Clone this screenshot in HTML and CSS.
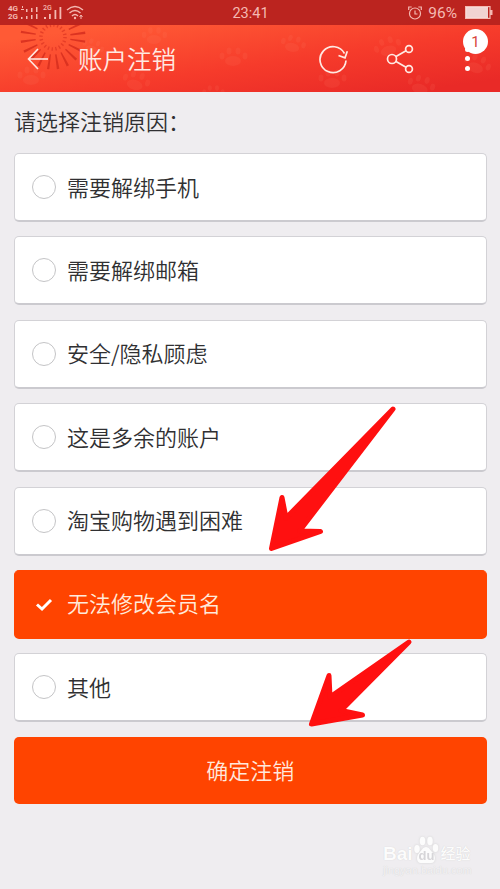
FILE: index.html
```
<!DOCTYPE html>
<html lang="zh-CN">
<head>
  <meta charset="UTF-8" />
  <meta name="viewport" content="width=device-width, initial-scale=1.0"/>
  <title>账户注销</title>
  <link rel="stylesheet" href="styles.css">
</head>
<body>
  <header class="top">
    <svg class="pattern" width="500" height="92" viewBox="0 0 500 92" aria-hidden="true">
      <defs>
        <g id="paw">
          <ellipse cx="0" cy="5" rx="8" ry="5"/>
          <ellipse cx="-11" cy="0" rx="2.500" ry="3.500"/>
          <ellipse cx="-4" cy="-5" rx="2.500" ry="3.500"/>
          <ellipse cx="5" cy="-5" rx="2.500" ry="3.500"/>
          <ellipse cx="12" cy="0" rx="2.500" ry="3.500"/>
        </g>
      </defs>
      <g class="paws">
        <use href="#paw" x="31" y="75"/>
        <use href="#paw" transform="translate(93 46) rotate(20) scale(.8)"/>
        <use href="#paw" transform="translate(136 80) rotate(15)"/>
        <use href="#paw" transform="translate(154 35) scale(.9)"/>
        <use href="#paw" x="233" y="56"/>
        <use href="#paw" transform="translate(293 43) rotate(12) scale(.9)"/>
        <use href="#paw" transform="translate(213 92) scale(.8)"/>
        <use href="#paw" x="332" y="78"/>
        <use href="#paw" transform="translate(387 46) rotate(-18)"/>
        <use href="#paw" transform="translate(421 84) rotate(15)"/>
        <use href="#paw" transform="translate(477 63) rotate(20)"/>
      </g>
      <g class="firework">
        <circle cx="53" cy="37" r="12" stroke-width="3.500" stroke-dasharray="1.300 2.470" opacity=".7"/>
        <circle cx="53" cy="37" r="25" stroke-width="15" stroke-dasharray="1.900 5.954" transform="rotate(6 53 37)"/>
      </g>
    </svg>

    <div class="status">
      <div class="signal">
        <div class="net"><span>4G</span><span>2G</span></div>
        <svg class="dual" width="17" height="15" viewBox="0 0 17 15" fill="currentColor">
          <path d="M1 0h1v2H1zM0 3h3v1H0zM5 3h1.500v3H5zM10 2h1.500v4H10zM15 1h1.500v5H15zM0 11h1.500v2H0zM5 10h1.500v3H5zM10 9h1.500v4H10zM15 8h1.500v5H15z"/>
        </svg>
        <div class="sim">
          <span>2G</span>
          <svg width="18" height="13" viewBox="0 0 18 13" fill="currentColor">
            <path d="M0 10h2v2H0zM5 7h1.800v5H5zM10.500 3h1.800v9h-1.800zM15.500 0h1.800v12h-1.800z"/>
          </svg>
        </div>
        <svg class="wifi" width="18" height="15" viewBox="0 0 18 15" fill="none" stroke="currentColor" stroke-width="1.4">
          <path d="M1 5Q9-2 17 5M3.5 8Q9 3 14.5 8M6 11Q9 8 12 11"/>
          <circle cx="9" cy="13" r="1.200" fill="currentColor" stroke="none"/>
          <path d="M15 10v4M13.5 12l1.5-2 1.5 2" stroke-width="1"/>
        </svg>
      </div>
      <span class="time">23:41</span>
      <div class="power">
        <svg width="14" height="14" viewBox="0 0 14 14" fill="none" stroke="currentColor" stroke-width="1.2">
          <circle cx="7" cy="7.5" r="5.5"/>
          <path d="M7 4.5V8h2.5M.7 4V1h3M13.3 4V1h-3"/>
        </svg>
        <span>96%</span>
        <svg class="battery" width="28" height="13" viewBox="0 0 28 13">
          <rect x=".6" y=".6" width="24.4" height="11.8" fill="none" stroke="currentColor" stroke-width="1.2"/>
          <rect x="1" y="1" width="22" height="11" fill="#fff" fill-opacity=".8"/>
          <path d="M25 4h2.5v5H25z" fill="currentColor"/>
        </svg>
      </div>
    </div>

    <nav class="navbar">
      <svg class="back" width="22" height="22" viewBox="0 0 22 22" fill="none" stroke="currentColor" stroke-width="1.6">
        <path d="M21 11H2M11 1L1.5 11 11 21"/>
      </svg>
      <h1>账户注销</h1>
      <svg class="refresh" width="30" height="30" viewBox="0 0 30 30" fill="none" stroke="currentColor" stroke-width="1.7">
        <path d="M25.500 9.500A13 13 0 1 0 27 16.500M19.500 11.500l6.500 2.300 2.300-6.500"/>
      </svg>
      <svg class="share" width="28" height="30" viewBox="0 0 28 30" fill="none" stroke="currentColor" stroke-width="1.7">
        <circle cx="6" cy="15" r="4.5"/>
        <circle cx="23" cy="5" r="3.4"/>
        <circle cx="23" cy="25" r="3.4"/>
        <path d="M10 12.6L20 6.7M10 17.4l10 5.9"/>
      </svg>
      <div class="more">
        <i></i><i></i><i></i>
        <span class="badge">1</span>
      </div>
    </nav>
  </header>

  <main>
    <h2>请选择注销原因：</h2>
    <form class="reasons">
      <label class="option"><span class="radio"></span><span>需要解绑手机</span></label>
      <label class="option"><span class="radio"></span><span>需要解绑邮箱</span></label>
      <label class="option"><span class="radio"></span><span>安全/隐私顾虑</span></label>
      <label class="option"><span class="radio"></span><span>这是多余的账户</span></label>
      <label class="option"><span class="radio"></span><span>淘宝购物遇到困难</span></label>
      <label class="option selected">
        <svg class="check" width="24" height="24" viewBox="0 0 24 24" fill="none" stroke="#fff" stroke-width="3">
          <path d="M5 12.5l5 4.5 9-9"/>
        </svg>
        <span>无法修改会员名</span>
      </label>
      <label class="option"><span class="radio"></span><span>其他</span></label>
      <button type="button" class="submit">确定注销</button>
    </form>
  </main>

  <footer class="watermark">
    <div class="brand">
      <span class="bai">Bai</span>
      <span class="paw-logo">
        <svg width="26" height="28" viewBox="0 0 26 28" fill="currentColor">
          <ellipse cx="4" cy="13" rx="2.800" ry="4"/>
          <ellipse cx="9.5" cy="5" rx="2.800" ry="4.3"/>
          <ellipse cx="17" cy="5" rx="2.800" ry="4.3"/>
          <ellipse cx="22.5" cy="12" rx="2.800" ry="4"/>
          <path d="M13 11c3 0 4 3 6.500 5.500C23 20 23 27 18 27H8c-5 0-5-7-1.500-10.500C9 14 10 11 13 11z"/>
        </svg>
        <b>du</b>
      </span>
      <span class="jingyan">经验</span>
    </div>
    <div class="url">jingyan.baidu.com</div>
  </footer>

  <svg class="arrows" width="500" height="889" viewBox="0 0 500 889" aria-hidden="true">
    <path d="M393 409L286 518 282 497.500 271.500 548.500 320.500 531.500 299.500 531z"/>
    <path d="M409 642L330 697 329 675.500 311.500 724 362.500 715 341 710.500z"/>
  </svg>
</body>
</html>
```
FILE: styles.css
```
:root {
  --accent-color: #ff4400;
  --bg-color: #efedf0;
  --text-color: #303032;
  --arrow-color: #ff1010;
}
* { box-sizing: border-box; }
body {
  margin: 0; height: 889px; position: relative; overflow: hidden;
  background: var(--bg-color); color: var(--text-color);
  font-family: "Noto Sans CJK SC", sans-serif; font-weight: 350;
}
svg { display: block; flex-shrink: 0; }

.top {
  position: relative; height: 92px; color: #fff;
  background: linear-gradient(172deg, #ff5a35 25%, #f63b2b 62%, #e92a27 92%);
}
.pattern { position: absolute; left: 0; top: 0; }
.paws { fill: #ff866c; fill-opacity: 0.12; }
.firework { fill: none; stroke: #d8301f; stroke-opacity: 0.9; }

.status {
  position: relative; height: 25px; padding: 0 7px 0 8px;
  display: grid; grid-template-columns: 1fr auto 1fr; align-items: center;
  background: rgba(184, 34, 30, 0.96); color: #f4b9b2;
  font-family: Roboto, sans-serif; font-weight: 400;
}
.signal { display: flex; align-items: flex-start; height: 16px; }
.net { display: flex; flex-direction: column; width: 12px; font-size: 8px; line-height: 8px; font-weight: 700; }
.dual { margin: 1px 0 0 1px; }
.sim { width: 18px; height: 15px; margin: 0 0 0 6px; display: grid; }
.sim > * { grid-area: 1 / 1; }
.sim span { font-size: 7px; line-height: 7px; font-weight: 500; margin-left: -1px; }
.sim svg { margin-top: 2px; }
.wifi { margin-left: 4px; }
.time { font-size: 14.500px; padding-top: 2px; }
.power { display: flex; justify-content: flex-end; align-items: center; font-size: 15.500px; }
.power span { margin: 1px 8px 0 6px; }

.navbar {
  position: relative; height: 67px; padding: 0 30px 0 27px;
  display: flex; align-items: center; color: #ffe9e2;
}
h1 { margin: 0 0 0 29px; flex: 1; font-size: 24.500px; font-weight: 350; line-height: 36px; }
.refresh { margin-right: 37px; }
.share { margin-right: 51px; }
.more { position: relative; width: 5px; display: flex; flex-direction: column; gap: 4.500px; }
.more i { width: 5px; height: 5px; border-radius: 50%; background: #fff; }
.badge {
  position: absolute; left: -2px; top: -18px; width: 25px; height: 25px; border-radius: 50%;
  background: #fff; color: #d8453d; text-align: center;
  font: 400 15px/26px Roboto, sans-serif;
}

main { padding: 10px 13.500px 0 14px; }
h2 { margin: 0 0 15px; font-size: 22px; font-weight: 350; line-height: 36px; }
.reasons { display: flex; flex-direction: column; gap: 14.400px; }
.option {
  height: 69px; padding: 0 17px; display: flex; align-items: center; gap: 11px;
  background: #fff; border: 1px solid #d3d2d6; border-bottom: 2px solid #cbcacf; border-radius: 5px;
  font-size: 22px; line-height: 32px;
}
.option > span:last-child { padding-bottom: 3px; }
.radio { width: 24px; height: 24px; border: 1.500px solid #c4c4c6; border-radius: 50%; }
.selected { background: var(--accent-color); border-color: var(--accent-color); color: #ffeadb; }
.submit {
  height: 67px; border: none; border-radius: 5px; padding: 0 0 3px;
  background: var(--accent-color); color: #ffe8dc;
  font: 350 22px/32px "Noto Sans CJK SC", sans-serif;
}

.watermark {
  margin: 30px 27px 0 auto; width: 90px; color: #fcfcfc;
  font-family: "Liberation Sans", "Noto Sans CJK SC", sans-serif;
  text-shadow: 0 0 1px #ccc;
}
.brand { display: flex; align-items: flex-end; height: 30px; font-size: 20px; line-height: 20px; }
.bai { font-weight: 700; font-size: 19px; }
.paw-logo { position: relative; filter: drop-shadow(0 0 1px #d3d3d3); }
.paw-logo b {
  position: absolute; left: 6px; top: 12px; color: #d6d5d8; text-shadow: none;
  font-size: 13px; line-height: 16px;
}
.jingyan { font-size: 15px; margin-left: 2px; font-weight: 500; }
.url { font-size: 11px; line-height: 13px; color: #f3f2f4; }

.arrows { position: absolute; left: 0; top: 0; pointer-events: none; }
.arrows path { fill: var(--arrow-color); stroke: var(--arrow-color); stroke-width: 5; stroke-linejoin: round; }
```
